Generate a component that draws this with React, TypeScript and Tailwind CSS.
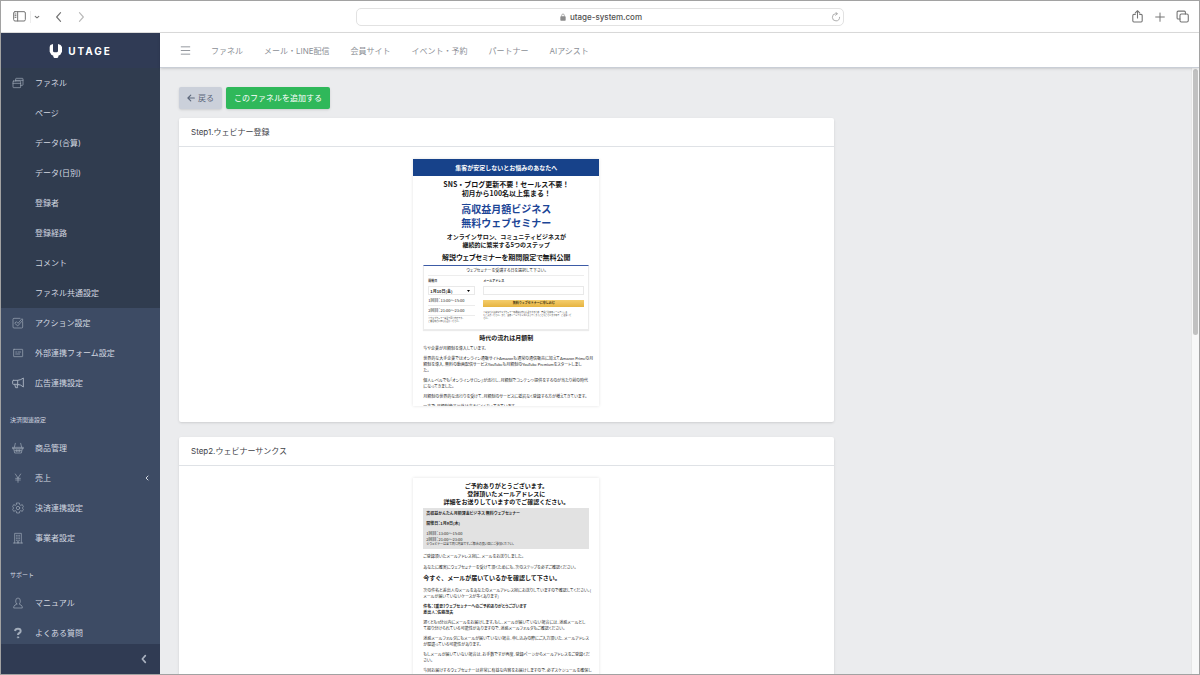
import type { ReactNode } from "react";

const stroke = {
  fill: "none",
  stroke: "currentColor",
  strokeWidth: 2,
  strokeLinecap: "round" as const,
  strokeLinejoin: "round" as const,
};

function Glyph({ children, className = "size-3" }: { children: ReactNode; className?: string }) {
  return (
    <svg viewBox="0 0 36 36" aria-hidden="true" className={`shrink-0 ${className}`} {...stroke}>
      {children}
    </svg>
  );
}

const icons = {
  windows: (
    <Glyph>
      <rect x="3" y="12" width="23" height="20" rx="2" />
      <path d="M3 19h23M11 12V6q0-2 2-2h18q2 0 2 2v17q0 2-2 2h-5M11 10h22" />
    </Glyph>
  ),
  check: (
    <Glyph>
      <path d="M32 14v16q0 3-3 3H6q-3 0-3-3V7q0-3 3-3h18" />
      <path d="M9 18l4-4 5 5L30 5l3 4-15 17z" />
    </Glyph>
  ),
  form: (
    <Glyph>
      <rect x="5" y="7" width="27" height="22" rx="1" strokeWidth="2" />
      <path d="M11 15h3M18 15h8M11 21h12" />
    </Glyph>
  ),
  horn: (
    <Glyph>
      <g strokeWidth="3">
        <path d="M4 10h13q10-1 17-7v27q-7-7-17-8H4q-2 0-2-2v-8q0-2 2-2zM17 10v12M8 22l3 10h6l-2-6 3-1-2-3" />
      </g>
    </Glyph>
  ),
  basket: (
    <Glyph>
      <path d="M2 16h32v4H2zM5 20l3 13h20l3-13M7 16L10 4M29 16L26 4M13 23v6M18 23v6M23 23v6M8 26h20" />
    </Glyph>
  ),
  yen: (
    <Glyph>
      <path d="M10 6l8 12 8-12M18 18v13M11 19h14M11 24h14" />
    </Glyph>
  ),
  gear: (
    <Glyph>
      <path d="M14 3h8l1 5 3 2 5-2 3 6-3 4 3 4-3 6-5-2-3 2-1 5h-8l-1-5-3-2-5 2-3-6 3-4-3-4 3-6 5 2 3-2z" />
      <circle cx="18" cy="18" r="5" />
    </Glyph>
  ),
  building: (
    <Glyph>
      <path d="M8 33V4h20v29M4 33h28M13 10h3M20 10h3M13 15h3M20 15h3M13 20h3M20 20h3M13 25h3M20 25h3M16 33v-4h4v4" />
    </Glyph>
  ),
  person: (
    <Glyph>
      <path d="M14 21q-3-4-3-9 0-9 7-9t7 9q0 5-3 9 1 3 5 3 4 2 4 9H5q0-7 4-9 4 0 5-3z" />
    </Glyph>
  ),
  question: (
    <Glyph>
      <path d="M9 12q1-7 9-7t8 7q0 4-4 6t-4 6" strokeWidth="6" strokeLinecap="butt" />
      <circle cx="18" cy="31" r="2" strokeWidth="3" />
    </Glyph>
  ),
};

type Item = { label: string; icon?: keyof typeof icons; more?: boolean };

const funnelItems: Item[] = [
  { label: "ファネル", icon: "windows" },
  { label: "ページ" },
  { label: "データ(合算)" },
  { label: "データ(日別)" },
  { label: "登録者" },
  { label: "登録経路" },
  { label: "コメント" },
  { label: "ファネル共通設定" },
];
const settingItems: Item[] = [
  { label: "アクション設定", icon: "check" },
  { label: "外部連携フォーム設定", icon: "form" },
  { label: "広告連携設定", icon: "horn" },
];
const paymentItems: Item[] = [
  { label: "商品管理", icon: "basket" },
  { label: "売上", icon: "yen", more: true },
  { label: "決済連携設定", icon: "gear" },
  { label: "事業者設定", icon: "building" },
];
const supportItems: Item[] = [
  { label: "マニュアル", icon: "person" },
  { label: "よくある質問", icon: "question" },
];

function Menu({ items, className = "" }: { items: Item[]; className?: string }) {
  return (
    <ul className={className}>
      {items.map((item) => (
        <li key={item.label}>
          <a href="#" className="flex h-[30px] items-center pr-[10px] pl-[11px] text-[8px]">
            <span className="mr-[11px] flex w-3 shrink-0 text-[#a3adbb]">{item.icon && icons[item.icon]}</span>
            <span className="grow">{item.label}</span>
            {item.more && (
              <Glyph className="size-[6px]">
                <path d="M24 6L12 18l12 12" strokeWidth="6" />
              </Glyph>
            )}
          </a>
        </li>
      ))}
    </ul>
  );
}

function Sidebar() {
  return (
    <aside className="flex w-[159px] shrink-0 flex-col bg-[#3d4b64] text-[#d3d8e0]">
      <a href="#" className="flex h-[35px] shrink-0 items-center justify-center gap-[6px] bg-[#303b55] text-white">
        <svg viewBox="0 0 39 42" aria-hidden="true" className="h-[14px] w-[13px]" fill="currentColor">
          <path d="M4 3L12 0v20q0 5 4 5h7q4 0 4-5V0l8 3 4 6v14l-5 9-6 3v4l-3 3h-9l-3-3v-4l-6-3-5-9V9z" />
        </svg>
        <span className="text-[10px] leading-none font-bold tracking-[2px]">UTAGE</span>
      </a>
      <nav className="min-h-0 grow overflow-hidden" aria-label="メインメニュー">
        <Menu items={funnelItems} className="bg-[#303c4f]" />
        <Menu items={settingItems} />
        <h2 className="mt-4 mb-[7px] px-[9px] text-[6px] leading-3">決済関連設定</h2>
        <Menu items={paymentItems} />
        <h2 className="mt-4 mb-[7px] px-[9px] text-[6px] leading-3">サポート</h2>
        <Menu items={supportItems} />
      </nav>
      <button type="button" aria-label="メニューを閉じる" className="flex h-[30px] shrink-0 items-center justify-end bg-[#303b53] pr-[10px] text-[#aab2c0]">
        <Glyph>
          <path d="M22 8L13 18l9 10" strokeWidth="5" />
        </Glyph>
      </button>
    </aside>
  );
}

function BrowserBar() {
  return (
    <div className="grid h-8 shrink-0 grid-cols-[1fr_488px_1fr] items-center border-b border-[#dcdcdc] bg-white text-[#747474]">
      <div className="flex items-center pl-3">
        <button type="button" aria-label="サイドバー">
          <svg viewBox="0 0 39 33" className="h-[11px] w-[13px]" {...stroke} strokeWidth="3">
            <rect x="2" y="2" width="35" height="28" rx="4" />
            <path d="M14 2v28M6 9h3M6 14h3M6 19h3" />
          </svg>
        </button>
        <span className="ml-1 h-3 w-px bg-[#ededed]" />
        <button type="button" aria-label="タブグループ" className="ml-[2px]">
          <Glyph className="size-2">
            <path d="M10 15l8 7 8-7" strokeWidth="5" />
          </Glyph>
        </button>
        <button type="button" aria-label="戻る" className="ml-[11px]">
          <Glyph className="size-[14px]">
            <path d="M22 7L12 18l10 11" strokeWidth="3" />
          </Glyph>
        </button>
        <button type="button" aria-label="進む" className="ml-2 text-[#b9b9b9]">
          <Glyph className="size-[14px]">
            <path d="M14 7l10 11-10 11" strokeWidth="3" />
          </Glyph>
        </button>
      </div>
      <div className="flex h-[18px] items-center rounded-[5px] border border-[#e2e2e2] px-[2px]">
        <span className="flex grow items-center justify-center gap-1 pl-3 text-[8px] leading-none font-medium text-[#505050]">
          <svg viewBox="0 0 18 24" aria-hidden="true" className="h-2 w-[6px] text-[#8c8c8c]" fill="currentColor">
            <rect x="1" y="10" width="16" height="13" rx="2" />
            <path d="M5 11V7q0-4 4-4t4 4v4" fill="none" stroke="currentColor" strokeWidth="2" />
          </svg>
          utage-system.com
        </span>
        <button type="button" aria-label="再読み込み" className="text-[#a0a0a0]">
          <Glyph className="size-[10px]">
            <path d="M31 19a13 13 0 1 1-13-13h4M17 1l6 5-6 6" strokeWidth="3" />
          </Glyph>
        </button>
      </div>
      <div className="flex items-center justify-end gap-[10px] pr-[10px]">
        <button type="button" aria-label="共有">
          <Glyph className="size-[13px]">
            <path d="M12 12H8q-3 0-3 3v15q0 3 3 3h20q3 0 3-3V15q0-3-3-3h-4M18 22V2M12 8l6-6 6 6" strokeWidth="3" />
          </Glyph>
        </button>
        <button type="button" aria-label="新規タブ">
          <Glyph className="size-3">
            <path d="M18 6v25M5 18h26" strokeWidth="3" />
          </Glyph>
        </button>
        <button type="button" aria-label="タブ一覧">
          <Glyph className="size-[13px]">
            <rect x="11" y="11" width="23" height="22" rx="4" strokeWidth="3" />
            <path d="M11 25H6q-3 0-3-3V6q0-3 3-3h17q3 0 3 3v5" strokeWidth="3" />
          </Glyph>
        </button>
      </div>
    </div>
  );
}

const tabs = ["ファネル", "メール・LINE配信", "会員サイト", "イベント・予約", "パートナー", "AIアシスト"];

function TopNav() {
  return (
    <header className="z-10 flex h-[35px] shrink-0 items-center gap-5 border-b border-[#c9ced6] bg-white pt-px pl-5 text-[8px] text-[#8c8f96] shadow-sm">
      <button type="button" aria-label="メニュー" className="text-[#8b8f96]">
        <Glyph className="size-[11px]">
          <path d="M4 6h28M4 18h28M4 30h28" strokeWidth="3" />
        </Glyph>
      </button>
      <nav className="flex gap-[21px]">
        {tabs.map((tab) => (
          <a key={tab} href="#">
            {tab}
          </a>
        ))}
      </nav>
    </header>
  );
}

function StepCard({ title, children, className = "" }: { title: string; children: ReactNode; className?: string }) {
  return (
    <section className={`w-2/3 rounded-[2px] bg-white shadow ${className}`}>
      <h2 className="flex h-[29px] items-center border-b border-[#dfe2e6] px-3 text-[8px] text-[#3e4247]">{title}</h2>
      <div className="flex justify-center pt-3 pb-4">{children}</div>
    </section>
  );
}

function Paragraphs({ items }: { items: string[][] }) {
  return (
    <>
      {items.map((lines) => (
        <p key={lines[0]}>
          {lines.map((line) => (
            <span key={line} className="block">
              {line}
            </span>
          ))}
        </p>
      ))}
    </>
  );
}

const previewFrame =
  "w-[186px] overflow-hidden bg-white text-[4px] leading-[6px] whitespace-nowrap text-[#2a2a2a] shadow-[0_0_3px_rgba(0,0,0,0.12)] font-['Noto_Sans_CJK_JP',sans-serif]";

const proportional = "[font-feature-settings:'palt']";

function RegisterPreview() {
  return (
    <article className={`h-[247px] ${previewFrame}`}>
      <p className="flex h-[17px] items-center justify-center bg-[#17428a] text-[6px] font-bold text-white">
        集客が安定しないとお悩みのあなたへ
      </p>
      <div className="px-[10px] text-center font-bold text-[#161616]">
        <p className="mt-1 text-[7px] leading-[9px]">
          SNS・ブログ更新不要！セールス不要！
          <br />
          初月から100名以上集まる！
        </p>
        <h3 className="mt-1 text-[10px] leading-[14px] text-[#1c4596]">
          高収益月額ビジネス
          <br />
          無料ウェブセミナー
        </h3>
        <p className="mt-[3px] text-[6px] leading-2">
          オンラインサロン、コミュニティビジネスが
          <br />
          継続的に繁栄する5つのステップ
        </p>
        <p className={`mt-1 text-[7px] leading-2 ${proportional}`}>解説ウェブセミナーを期間限定で無料公開</p>
      </div>
      <form className="mx-[10px] mt-1 h-[65px] border border-[#ececec] border-t-[#3c5ba6] px-1 shadow-[0_1px_1px_rgba(0,0,0,0.08)]">
        <p className={`border-b border-[#ededed] pt-px pb-[2px] text-center ${proportional}`}>
          ウェブセミナーを受講する日を選択して下さい。
        </p>
        <div className="grid grid-cols-[47px_1fr] gap-2 pt-1 text-[3px] leading-[3px]">
          <div>
            <label htmlFor="date" className="block font-bold">
              開催日
            </label>
            <span className="mt-[3px] flex items-center border border-[#e9e9e9] pr-1">
              <select id="date" className="h-[7px] grow appearance-none px-px text-[4px] leading-[6px] font-bold">
                <option>1月10日(金)</option>
              </select>
              <svg viewBox="0 0 6 4" aria-hidden="true" className="h-[2px] w-[3px]">
                <path d="M0 0h6L3 4z" />
              </svg>
            </span>
            <p className={`border-b border-[#ececec] pt-[3px] pb-[2px] text-[4px] leading-[5px] ${proportional}`}>1回目：13:00〜15:00</p>
            <p className={`border-b border-[#ececec] py-[2px] text-[4px] leading-[5px] ${proportional}`}>2回目：21:00〜23:00</p>
            <p className="mt-px text-[2px] leading-[3px]">
              ※ウェブセミナーは全て同じ内容です。
              <br />
              ご都合の良い日をお選びください。
            </p>
          </div>
          <div>
            <label htmlFor="mail" className="block font-bold">
              メールアドレス
            </label>
            <input id="mail" type="email" className="mt-[3px] block h-[9px] w-full border border-[#e9e9e9]" />
            <button type="button" className="mt-[5px] block h-[7px] w-full bg-linear-to-b from-[#f4cd6c] to-[#e6b43f] text-[3px] font-bold text-[#3c300f]">
              無料ウェブセミナーに申し込む
            </button>
            <p className="mt-1 text-[2px] leading-[3px]">
              ※あなたに最適なウェブセミナーの視聴案内をお送りするため、普段ご利用のメールアドレス
              <br />
              をご入力ください。また、迷惑メールフォルダに入ってしまうこともございますので、ご注意くだ
              <br />
              さい。
            </p>
          </div>
        </div>
      </form>
      <h3 className="mt-1 text-center text-[6px] leading-2 font-bold text-[#161616]">時代の流れは月額制</h3>
      <div className={`mt-1 flex flex-col gap-1 px-[10px] font-['Lato','Noto_Sans_CJK_JP',sans-serif] ${proportional}`}>
        <Paragraphs
          items={[
            ["今や企業が月額制を導入しています。"],
            [
              "世界的な大手企業ではオンライン通販サイトAmazonも通常の通信販売に加えてAmazon Primeの月",
              "額制を導入、無料の動画配信サービスYouTubeも月額制のYouTube Premiumをスタートしまし",
              "た。",
            ],
            ["個人レベルでも「オンラインサロン」が流行し、月額制でコンテンツ提供をするのが当たり前の時代", "になってきました。"],
            ["月額制の世界的な流行りを受けて、月額制のサービスに抵抗なく登録する方が増えてきています。"],
            ["一方で、月額制商品以外は売れにくくなってきています。"],
          ]}
        />
      </div>
    </article>
  );
}

function ThanksPreview() {
  return (
    <article className={`pb-4 ${previewFrame}`}>
      <h3 className="mt-1 text-center text-[6px] leading-2 font-bold text-[#161616]">
        ご予約ありがとうございます。
        <br />
        登録頂いたメールアドレスに
        <br />
        詳細をお送りしていますのでご確認ください。
      </h3>
      <div className={`mx-[10px] mt-[2px] bg-[#e2e2e2] px-[3px] py-[2px] ${proportional}`}>
        <p className="font-bold">高収益かんたん月額課金ビジネス 無料ウェブセミナー</p>
        <p className="mt-1 font-bold">開催日：1月9日(木)</p>
        <p className="mt-1">
          1回目：13:00〜15:00
          <br />
          2回目：21:00〜23:00
        </p>
        <p className="text-[3px] leading-[5px]">※ウェビナーは全て同じ内容です。ご都合の良い回にご参加ください。</p>
      </div>
      <div className={`mt-1 flex flex-col gap-[5px] px-[10px] ${proportional}`}>
        <Paragraphs
          items={[
            ["ご登録頂いたメールアドレス宛に、メールをお送りしました。"],
            ["あなたに確実にウェブセミナーを受けて頂くためにも、次のステップを必ずご確認ください。"],
          ]}
        />
      </div>
      <h4 className="mt-1 px-[10px] text-[6px] leading-2 font-bold text-[#161616]">今すぐ、メールが届いているかを確認して下さい。</h4>
      <div className={`mt-[5px] flex flex-col gap-1 px-[10px] ${proportional}`}>
        <Paragraphs
          items={[["次の件名と差出人のメールをあなたのメールアドレス宛にお送りしていますので確認してください。(", "メールが届いていないケースが多くあります)"]]}
        />
        <p className="font-bold">
          件名：【重要】ウェブセミナーへのご予約ありがとうございます
          <br />
          差出人：佐藤茂夫
        </p>
        <Paragraphs
          items={[
            ["遅くとも5分以内にメールをお届けします。もし、メールが届いていない場合には、迷惑メールとし", "て振り分けられている可能性がありますので、迷惑メールフォルダもご確認ください。"],
            ["迷惑メールフォルダにもメールが届いていない場合、申し込みの際にご入力頂いた、メールアドレス", "が間違っている可能性があります。"],
            ["もしメールが届いていない場合は、お手数ですが再度、登録ページからメールアドレスをご登録くだ", "さい。"],
            ["今回お届けするウェブセミナーは非常に有益な内容をお届けしますので、必ずスケジュールを確保し"],
          ]}
        />
      </div>
    </article>
  );
}

export default function App() {
  return (
    <div className="flex h-screen flex-col overflow-hidden border border-[#a2a2a2] bg-white font-['Inter','Noto_Sans_CJK_JP',sans-serif]">
      <BrowserBar />
      <div className="flex min-h-0 grow">
        <Sidebar />
        <div className="flex min-w-0 grow flex-col">
          <TopNav />
          <div className="flex min-h-0 grow">
            <main className="min-w-0 grow overflow-hidden bg-[#ebecee] pt-[19px] pr-[30px] pl-[19px]">
              <div className="flex gap-1 text-[8px]">
                <button type="button" className="flex h-[22px] items-center gap-[3px] rounded-[2px] bg-[#cbd0da] px-2 text-[#5d687c] shadow-sm">
                  <Glyph className="size-2">
                    <path d="M33 18H4M17 5L4 18l13 13" strokeWidth="5" />
                  </Glyph>
                  戻る
                </button>
                <button type="button" className="h-[22px] rounded-[2px] bg-[#2fb85a] px-2 text-white shadow-sm">
                  このファネルを追加する
                </button>
              </div>
              <StepCard title="Step1.ウェビナー登録" className="mt-[9px]">
                <RegisterPreview />
              </StepCard>
              <StepCard title="Step2.ウェビナーサンクス" className="mt-[15px]">
                <ThanksPreview />
              </StepCard>
            </main>
            <div aria-hidden="true" className="w-2 shrink-0 border-l border-[#e6e6e6] bg-[#f8f8f8] px-px pt-px">
              <div className="h-[44%] rounded-full bg-[#c1c1c1]" />
            </div>
          </div>
        </div>
      </div>
    </div>
  );
}
